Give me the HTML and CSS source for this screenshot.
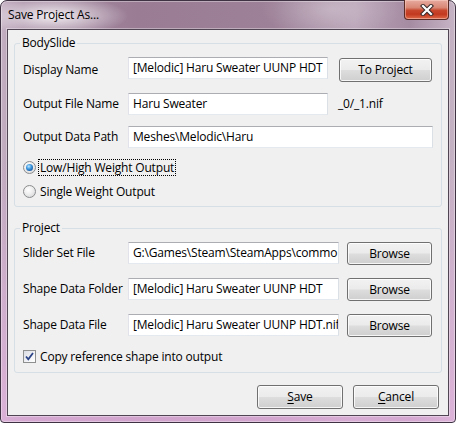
FILE: index.html
```html
<!DOCTYPE html>
<html lang="en">
<head>
<meta charset="utf-8">
<title>Save Project As...</title>
<link rel="stylesheet" href="styles.css">
</head>
<body>
<div class="window">
  <div class="titlebar">
    <span class="title">Save Project As...</span>
    <div class="close">
      <svg width="14" height="12" viewBox="0 0 14 12">
        <path d="M3 2 L11 10 M11 2 L3 10" stroke="#3b2a2a" stroke-width="4.2" stroke-linecap="square" fill="none"/>
        <path d="M3 2 L11 10 M11 2 L3 10" stroke="#ffffff" stroke-width="2.2" stroke-linecap="square" fill="none"/>
      </svg>
    </div>
  </div>
  <div class="client">
    <fieldset class="group">
      <legend>BodySlide</legend>
      <div class="rows rows-body">
        <div class="row row-first">
          <span class="lbl lbl-first">Display Name</span>
          <div class="tb tb-200">[Melodic] Haru Sweater UUNP HDT</div>
          <button class="btn btn-toproj">To Project</button>
        </div>
        <div class="row row-mid">
          <span class="lbl">Output File Name</span>
          <div class="tb tb-200">Haru Sweater</div>
          <span class="suffix">_0/_1.nif</span>
        </div>
        <div class="row row-mid">
          <span class="lbl">Output Data Path</span>
          <div class="tb tb-fill">Meshes\Melodic\Haru</div>
        </div>
        <div class="opt opt-first">
          <span class="radio radio-on"></span>
          <span class="opt-text focus">Low/High Weight Output</span>
        </div>
        <div class="opt opt-second">
          <span class="radio"></span>
          <span class="opt-text">Single Weight Output</span>
        </div>
      </div>
    </fieldset>
    <fieldset class="group group-project">
      <legend>Project</legend>
      <div class="rows rows-project">
        <div class="prow">
          <span class="lbl lbl-tall">Slider Set File</span>
          <div class="tb tb-211">G:\Games\Steam\SteamApps\commo</div>
          <button class="btn btn-browse">Browse</button>
        </div>
        <div class="prow">
          <span class="lbl lbl-tall">Shape Data Folder</span>
          <div class="tb tb-211">[Melodic] Haru Sweater UUNP HDT</div>
          <button class="btn btn-browse">Browse</button>
        </div>
        <div class="prow">
          <span class="lbl lbl-tall">Shape Data File</span>
          <div class="tb tb-211">[Melodic] Haru Sweater UUNP HDT.nif</div>
          <button class="btn btn-browse">Browse</button>
        </div>
        <div class="opt opt-check">
          <span class="check">
            <svg width="11" height="11" viewBox="0 0 11 11">
              <path d="M2 5.5 L4.3 8.3 L9 2" stroke="#2b4487" stroke-width="1.8" fill="none"/>
            </svg>
          </span>
          <span class="opt-text">Copy reference shape into output</span>
        </div>
      </div>
    </fieldset>
    <div class="footer">
      <button class="btn btn-foot"><u>S</u>ave</button>
      <button class="btn btn-foot"><u>C</u>ancel</button>
    </div>
  </div>
</div>
</body>
</html>
```
FILE: styles.css
```css
* { box-sizing: border-box; }
html, body { margin: 0; padding: 0; background: #ffffff; }
body {
  font-family: "Open Sans", "Noto Sans", sans-serif;
  font-size: 12px;
  letter-spacing: -0.18px;
  color: #000;
}
.window {
  width: 456px;
  height: 423px;
  border: 1px solid #3e3243;
  border-radius: 7px 7px 4px 4px;
  padding: 0 6px 6px 6px;
  display: flex;
  flex-direction: column;
  box-shadow: inset 0 0 0 1px rgba(255,255,255,0.35);
  background:
    radial-gradient(ellipse 75px 20px at 52px 15px, rgba(255,255,255,0.85), rgba(255,255,255,0) 100%),
    radial-gradient(ellipse 70px 30px at 330px 8px, rgba(255,255,255,0.28), rgba(255,255,255,0) 100%),
    linear-gradient(to bottom, rgba(232,186,228,0) 0%, rgba(232,186,228,0) 35%, rgba(228,178,224,0.75) 100%),
    linear-gradient(to right, #c4b0c3 0%, #a88da5 5%, #9a7d95 30%, #9d8198 60%, #b6a0b4 78%, #a68ca3 90%, #c6b4c5 100%);
}
.titlebar {
  height: 28px;
  display: flex;
  align-items: flex-start;
  padding: 6px 0 0 1px;
}
.title {
  line-height: 16px;
  font-size: 12px;
  color: #000;
}
.close {
  margin-left: auto;
  margin-top: -7px;
  width: 45px;
  height: 20px;
  border: 1px solid #5a2a24;
  border-top: none;
  border-radius: 0 0 4px 4px;
  display: flex;
  align-items: center;
  justify-content: center;
  padding-top: 1px;
  background: linear-gradient(to bottom, #e7ab9f 0%, #d98775 40%, #c7472d 55%, #c2391f 75%, #de6a4a 100%);
  box-shadow: inset 0 0 0 1px rgba(255,220,210,0.45);
}
.client {
  flex: 1;
  background: #f0f0f0;
  border: 1px solid #4f4553;
  box-shadow: 0 0 0 1px rgba(255,255,255,0.35);
  padding: 5px 6px 0 6px;
  display: flex;
  flex-direction: column;
}
.group {
  margin: 0;
  padding: 0;
  border: 1px solid #d5dfe5;
  border-radius: 3px;
  min-width: 0;
}
.group legend {
  margin-left: 5px;
  padding: 0 2px;
  line-height: 16px;
}
.group-project { margin-top: 13px; }
.rows {
  display: flex;
  flex-direction: column;
  padding: 6px 8px 6px 8px;
}
.rows-project { padding-bottom: 7px; }
.row {
  display: flex;
  align-items: center;
}
.row-first { align-items: flex-start; height: 25px; }
.row-mid { margin-top: 11px; height: 22px; }
.lbl {
  width: 105px;
  flex: none;
  line-height: 16px;
  white-space: nowrap;
}
.lbl-first { margin-top: 5px; }
.lbl-tall { line-height: 22px; }
.tb {
  height: 22px;
  background: #fff;
  border: 1px solid;
  border-color: #abadb3 #dbdfe6 #e3e9ef #e2e3ea;
  padding: 0 3px 0 4px;
  line-height: 20px;
  white-space: nowrap;
  overflow: hidden;
  flex: none;
}
.tb-200 { width: 200px; }
.tb-211 { width: 211px; }
.tb-fill { flex: 1; }
.suffix { margin-left: 10px; margin-top: -2px; }
.btn {
  font: inherit;
  letter-spacing: inherit;
  color: #000;
  border: 1px solid #707070;
  border-radius: 3px;
  padding: 0;
  background: linear-gradient(to bottom, #f2f2f2 0%, #ebebeb 48%, #dddddd 52%, #cfcfcf 100%);
  box-shadow: inset 0 0 0 1px rgba(255,255,255,0.8);
  line-height: 16px;
  flex: none;
}
.btn-toproj { width: 93px; height: 24px; margin-left: 11px; margin-top: 1px; }
.btn-browse { width: 85px; height: 23px; margin-left: 8px; }
.btn-foot { width: 86px; height: 24px; }
.btn u { text-decoration: underline; text-underline-offset: 2px; }
.opt {
  display: flex;
  align-items: center;
  height: 17px;
}
.opt-first { margin-top: 11px; }
.opt-second { margin-top: 7px; }
.opt-check { margin-top: 11px; }
.opt-text {
  border: 1px dotted transparent;
  padding: 0 1px;
  line-height: 15px;
  white-space: nowrap;
}
.opt-text.focus { border-color: #000; }
.radio {
  width: 13px;
  height: 13px;
  border-radius: 50%;
  border: 1px solid #8a8c8e;
  margin-right: 2px;
  flex: none;
  display: flex;
  align-items: center;
  justify-content: center;
  background: radial-gradient(circle at 40% 35%, #ffffff 0%, #f0f0f0 40%, #cfd0d2 100%);
}
.radio-on::after {
  content: "";
  width: 7px;
  height: 7px;
  border-radius: 50%;
  background: radial-gradient(circle at 40% 35%, #bfe6ff 0%, #3f9ae0 40%, #14549f 80%, #0f3f7c 100%);
}
.prow {
  display: flex;
  align-items: flex-start;
  height: 23px;
}
.prow + .prow { margin-top: 13px; }
.check {
  width: 13px;
  height: 13px;
  border: 1px solid #8e8f8f;
  margin-right: 2px;
  flex: none;
  display: flex;
  align-items: center;
  justify-content: center;
  background: linear-gradient(135deg, #d9dce3 0%, #f6f7f9 70%, #ffffff 100%);
}
.footer {
  display: flex;
  justify-content: flex-end;
  gap: 10px;
  margin-top: 12px;
  padding-right: 3px;
}
```
